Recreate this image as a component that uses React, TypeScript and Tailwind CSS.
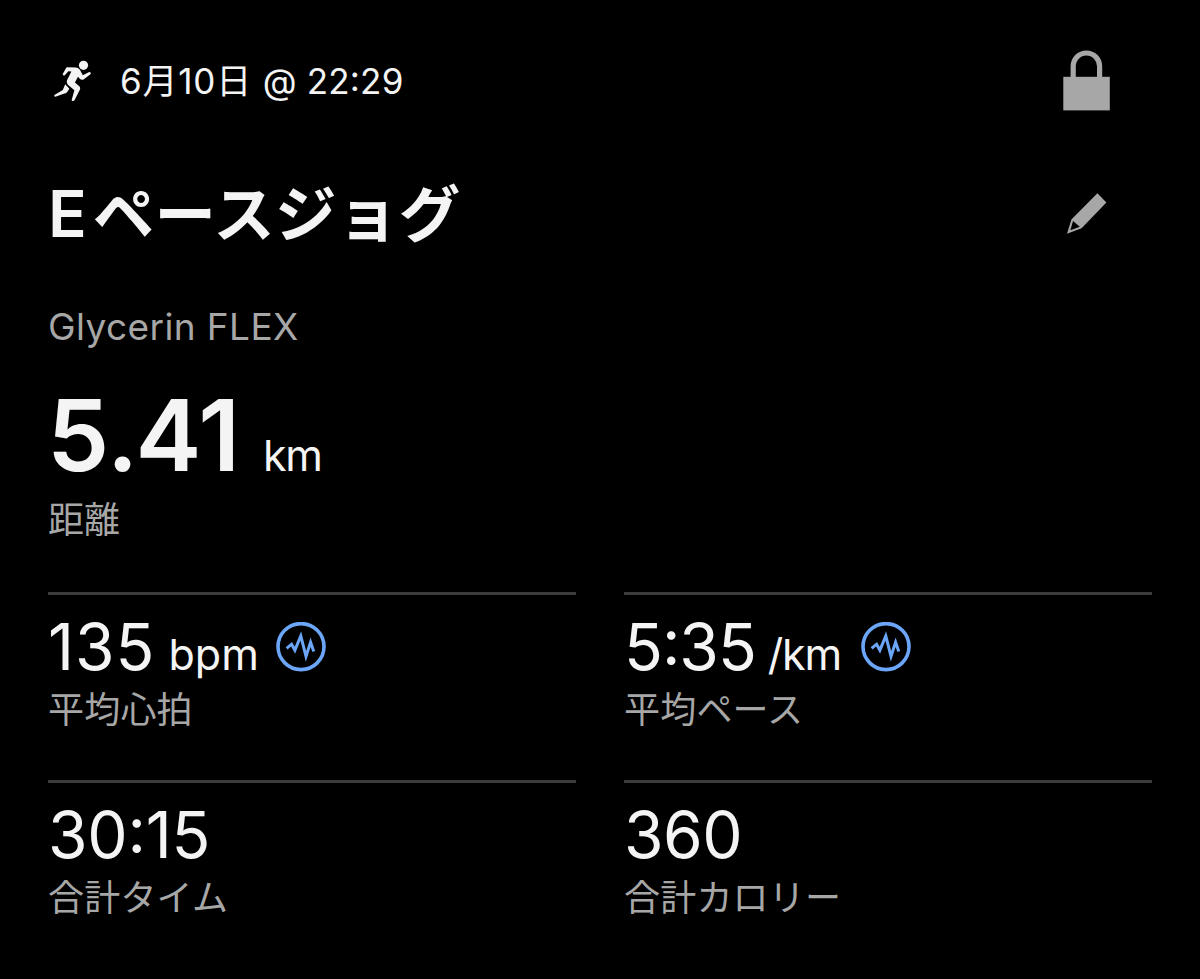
import type { ReactNode } from "react";

type Stat = {
  value: ReactNode;
  unit?: string;
  label: string;
  valueClass: string;
  unitClass?: string;
  graphClass?: string;
};

function Colon() {
  return <span className="relative -top-[0.08em]">:</span>;
}

const STATS: Stat[] = [
  {
    value: "135",
    unit: "bpm",
    label: "平均心拍",
    valueClass: "tracking-[1px]",
    unitClass: "ml-[13px]",
    graphClass: "ml-[17.5px]",
  },
  {
    value: <>5<Colon />35</>,
    unit: "/km",
    label: "平均ペース",
    valueClass: "tracking-[-1px]",
    unitClass: "ml-[12px] tracking-[-1.2px]",
    graphClass: "ml-[20px]",
  },
  { value: <>30<Colon />15</>, label: "合計タイム", valueClass: "tracking-[-0.2px]" },
  { value: "360", label: "合計カロリー", valueClass: "tracking-[-0.5px]" },
];

function RunnerIcon() {
  return (
    <svg width="60" height="60" viewBox="0 0 60 60" className="-ml-[3px] shrink-0" fill="#f4f4f4">
      <circle cx="38.5" cy="15.3" r="4.6" />
      <path d="M22.4 17.2L31 17.6Q34.8 18.4 35.8 21.5L37.8 25.3L44.2 22Q46.2 22 45.8 24L38.5 29.6Q36.4 30.4 34.8 28.8L33 26.8L29.9 32.4L34.6 36.6Q35.6 38 35 39.6L29.6 50Q28.2 52 26.6 50.2L29.4 40.2L22.6 34.4Q21 32.6 22 30.2L26.4 21.4L23.4 21.2L19.8 25.2Q18.4 26.2 17.6 24.2L20.8 18.4Q21.4 17.2 22.4 17.2Z" />
      <path d="M20.2 34.2L24.4 38.8L22 42.2Q21 43.4 19.4 43.6L10.4 46.8Q8.6 46.4 9.4 45L17.8 40Z" />
    </svg>
  );
}

function LockIcon() {
  return (
    <svg width="48" height="62" viewBox="0 0 48 62" className="mr-[42px]">
      <path d="M11.2 29V17.2a13.2 13.2 0 0 1 26.4 0V29" fill="none" stroke="#a7a7a7" strokeWidth="5.2" />
      <rect x="1.3" y="27.8" width="46.5" height="33.6" fill="#a7a7a7" />
    </svg>
  );
}

function PencilIcon() {
  return (
    <svg width="44" height="44" viewBox="0 0 44 44" className="mr-[44px]">
      <path
        fill="#a7a7a7"
        fillRule="evenodd"
        d="M33.4 1.2L42.4 10.5L17.6 36.2L3 41.8L7.4 27.6ZM9 29L6.4 38.2L15.8 34.8Z"
      />
    </svg>
  );
}

function GraphIcon({ className }: { className?: string }) {
  return (
    <svg width="50" height="50" viewBox="0 0 50 50" className={`shrink-0 ${className}`} fill="none" stroke="#6ba6f8">
      <circle cx="25" cy="24.6" r="23" strokeWidth="3.6" />
      <path d="M10.6 26.4L15.6 22.2L18.9 28.2L24.8 14L30 34.4L34.6 20.2L37.8 29.4" strokeWidth="3" />
    </svg>
  );
}

function StatCell({ stat }: { stat: Stat }) {
  return (
    <div className="h-[188px] border-t-[3px] border-[#3c3c3c] pt-5">
      <div className="flex h-16 items-center">
        <div className="flex h-16 items-baseline leading-[64px]">
          <span className={`text-[64px] ${stat.valueClass}`}>{stat.value}</span>
          {stat.unit && <span className={`text-[43px] ${stat.unitClass}`}>{stat.unit}</span>}
        </div>
        {stat.graphClass && <GraphIcon className={stat.graphClass} />}
      </div>
      <div className="mt-[9px] text-[36px] leading-[44px] tracking-[0.2px] text-[#a7a7a7]">{stat.label}</div>
    </div>
  );
}

export default function App() {
  return (
    <main
      lang="ja"
      className="h-[979px] w-[1200px] overflow-hidden bg-black px-12 pt-12 font-['Inter','Noto_Sans_CJK_JP',sans-serif] whitespace-nowrap text-[#f4f4f4]"
    >
      <header className="flex h-16 items-center">
        <RunnerIcon />
        <div className="ml-[15px] grow pt-[2px] text-[35px] leading-[44px]">
          <span className="tracking-[0.8px]">6月10日 </span>
          <span className="tracking-[0.2px]">@ 22<Colon />29</span>
        </div>
        <LockIcon />
      </header>

      <div className="mt-[70px] flex h-16 items-center justify-between">
        <h1 className="text-[64px] leading-[64px] font-semibold">
          E<span className="ml-[6px] text-[61.5px] font-bold tracking-[0.3px]">ペースジョグ</span>
        </h1>
        <PencilIcon />
      </div>

      <p className="mt-[57px] text-[37px] leading-[48px] tracking-[0.4px] text-[#a7a7a7]">Glycerin FLEX</p>

      <div className="mt-[34px] flex h-[100px] items-baseline leading-[100px]">
        <span className="-ml-px text-[99px] font-semibold">
          5.<span className="-ml-[3px]">41</span>
        </span>
        <span className="ml-[23px] text-[43px] tracking-[-1.5px]">km</span>
      </div>
      <div className="mt-[13px] text-[36px] leading-[44px] text-[#a7a7a7]">距離</div>

      <section className="mt-[50px] grid grid-cols-2 gap-x-12">
        {STATS.map((stat) => (
          <StatCell key={stat.label} stat={stat} />
        ))}
      </section>
    </main>
  );
}
